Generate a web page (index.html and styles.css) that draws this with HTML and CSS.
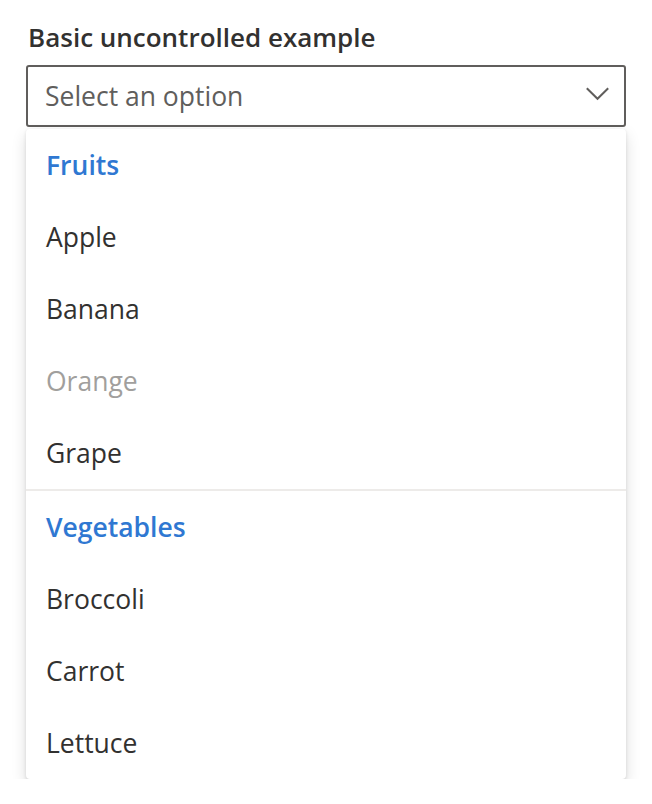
FILE: index.html
```html
<!DOCTYPE html>
<html>
<head>
<meta charset="utf-8">
<link rel="stylesheet" href="styles.css">
</head>
<body>
<div class="page">
  <label class="label">Basic uncontrolled example</label>
  <div class="dropdown">
    <span class="placeholder">Select an option</span>
    <svg class="chevron" width="23" height="14" viewBox="0 0 23 14"><path d="M0.8 1.2 L11.5 11.8 L22.2 1.2" fill="none" stroke="#605e5c" stroke-width="2"/></svg>
  </div>
  <div class="menu">
    <div class="header">Fruits</div>
    <div class="option">Apple</div>
    <div class="option">Banana</div>
    <div class="option disabled">Orange</div>
    <div class="option">Grape</div>
    <div class="divider"></div>
    <div class="header">Vegetables</div>
    <div class="option">Broccoli</div>
    <div class="option">Carrot</div>
    <div class="option">Lettuce</div>
  </div>
</div>
</body>
</html>
```
FILE: styles.css
```css
html, body { margin: 0; padding: 0; background: #fff; }
body { font-family: "Open Sans", "Noto Sans", sans-serif; color: #323130; }
.page { padding: 19px 26px 0 26px; width: 600px; }
.label { display: block; font-size: 26px; font-weight: 600; line-height: 36px; padding: 0 2px 10px 2px; color: #323130; }
.dropdown { box-sizing: border-box; height: 62px; border: 2px solid #605e5c; border-radius: 3px; display: flex; align-items: center; justify-content: space-between; padding: 0 15px 0 17px; }
.placeholder { font-size: 26.5px; color: #605e5c; }
.chevron { display: block; margin-top: -4px; }
.menu { margin-top: 2px; border-radius: 4px; background: #fff; box-shadow: 0 6.4px 14.4px rgba(0,0,0,0.132), 0 1.2px 3.6px rgba(0,0,0,0.108); }
.header, .option { height: 72px; display: flex; align-items: center; padding: 0 19px 0 20px; font-size: 26.5px; }
.header { color: #2f78d2; font-weight: 600; }
.option { color: #323130; }
.option.disabled { color: #a19f9d; }
.divider { height: 2px; background: #edebe9; }
```
